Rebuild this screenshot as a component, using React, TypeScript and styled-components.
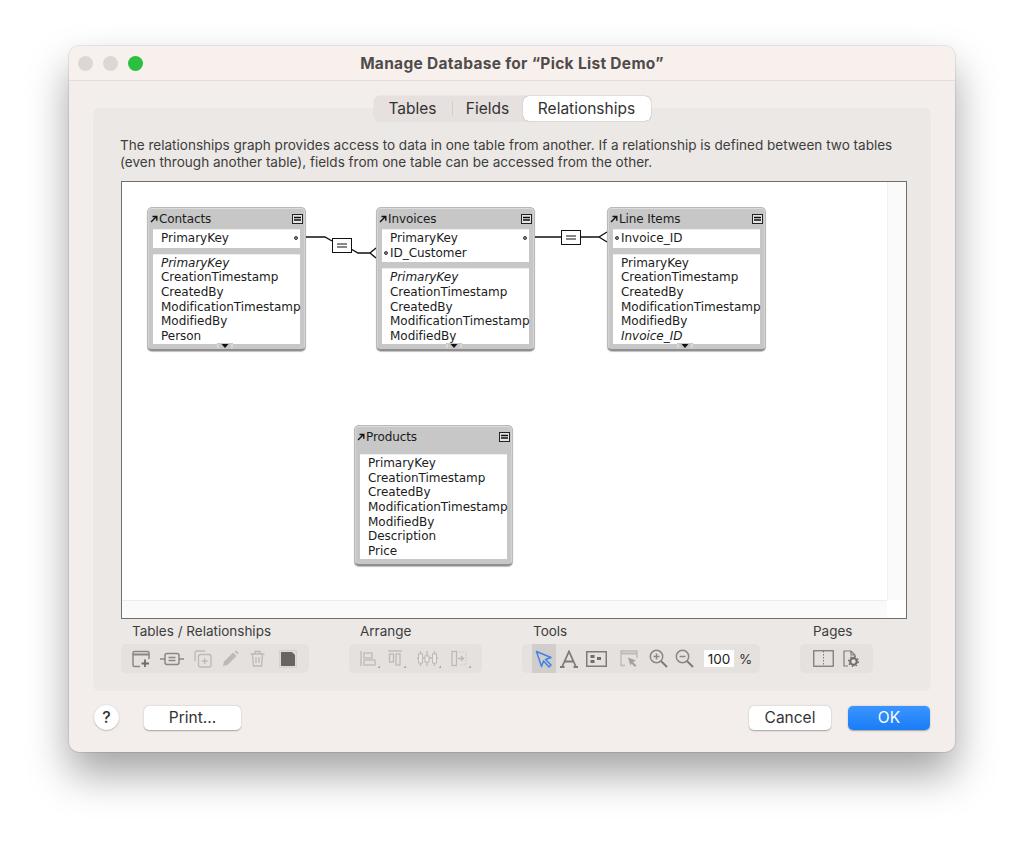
import React from "react";
import styled, { createGlobalStyle } from "styled-components";

const GlobalStyle = createGlobalStyle`
  html, body {
    margin: 0;
    padding: 0;
    background: #ffffff;
  }
  body {
    font-family: "Inter", "Liberation Sans", sans-serif;
    color: #3a3a3a;
  }
`;

const Page = styled.div`
  width: 1024px;
  height: 843px;
  padding: 46px 69px 0;
  box-sizing: border-box;
  overflow: hidden;
`;

const Window = styled.div`
  width: 886px;
  height: 706px;
  box-sizing: border-box;
  border-radius: 10px;
  background: #f3eeeb;
  box-shadow: 0 0 0 1px rgba(0, 0, 0, 0.08), 0 22px 42px rgba(0, 0, 0, 0.36);
  display: flex;
  flex-direction: column;
  overflow: visible;
`;

const TitleBar = styled.div`
  height: 35px;
  flex: none;
  display: flex;
  align-items: center;
  position: relative;
  justify-content: center;
  background: #f8f0ed;
  border-radius: 10px 10px 0 0;
  border-bottom: 1px solid #e2dedb;
  box-sizing: border-box;
`;

const Lights = styled.div`
  position: absolute;
  left: 9px;
  top: 10px;
  display: flex;
  gap: 10px;
`;

const Light = styled.span<{ $color: string }>`
  width: 15px;
  height: 15px;
  border-radius: 50%;
  background: ${(p) => p.$color};
`;

const Title = styled.div`
  font-size: 15.5px;
  font-weight: 700;
  color: #4f4c4b;
  letter-spacing: 0.3px;
`;

const Body = styled.div`
  flex: 1;
  padding: 15px 24px 0;
  display: flex;
  flex-direction: column;
  align-items: center;
`;

const Tabs = styled.div`
  width: 277px;
  height: 25px;
  box-sizing: border-box;
  flex: none;
  margin-bottom: -13px;
  position: relative;
  z-index: 1;
  display: flex;
  align-items: center;
  background: #e6e0de;
  border-radius: 6px;
  box-shadow: 0 0 0 0.5px rgba(0, 0, 0, 0.06);
`;

const Tab = styled.div<{ $w: number; $active?: boolean }>`
  width: ${(p) => p.$w}px;
  height: 25px;
  line-height: 25px;
  text-align: center;
  font-size: 15.5px;
  color: #333;
  border-radius: 6px;
  background: ${(p) => (p.$active ? "#ffffff" : "transparent")};
  box-shadow: ${(p) => (p.$active ? "0 0 1px rgba(0,0,0,.45)" : "none")};
`;

const TabSep = styled.span`
  width: 1px;
  height: 15px;
  background: #d3cecb;
`;

const Panel = styled.div`
  width: 838px;
  height: 583px;
  flex: none;
  box-sizing: border-box;
  padding: 29px 24px 0 27px;
  background: #ece8e5;
  border-radius: 6px;
`;

const Intro = styled.p`
  margin: 0 0 10px;
  font-size: 13.54px;
  line-height: 17px;
  color: #3d3d3d;
  height: 34px;
  white-space: nowrap;
`;

const Canvas = styled.div`
  margin-left: 1px;
  width: 786px;
  height: 438px;
  box-sizing: border-box;
  border: 1px solid #6f6f6f;
  background: #ffffff;
  position: relative;
  overflow: hidden;
`;

const ScrollV = styled.div`
  position: absolute;
  top: 0;
  right: 0;
  bottom: 18px;
  width: 19px;
  box-sizing: border-box;
  background: #fafafa;
  border-left: 1px solid #f0f0f0;
`;

const ScrollH = styled.div`
  position: absolute;
  left: 0;
  right: 19px;
  bottom: 0;
  height: 18px;
  box-sizing: border-box;
  background: #fafafa;
  border-top: 1px solid #ececec;
`;

const Links = styled.svg`
  position: absolute;
  left: 0;
  top: 0;
`;

const Node = styled.div<{ $x: number; $y: number }>`
  position: absolute;
  left: ${(p) => p.$x}px;
  top: ${(p) => p.$y}px;
  width: 159px;
  box-sizing: border-box;
  padding: 0 5px 5px;
  background: #c7c7c7;
  border-radius: 5px;
  border: 1px solid #b9b9b9;
  border-bottom: 2px solid #8f8f8f;
  box-shadow: 0 1px 1px rgba(0, 0, 0, 0.25), inset 0 1px 0 #dcdcdc, inset 1px 0 0 #d4d4d4, inset -1px 0 0 #d4d4d4;
  font-family: "DejaVu Sans", sans-serif;
  color: #1c1c1c;
`;

const NodeHead = styled.div`
  height: 21px;
  display: flex;
  align-items: center;
  margin: 0 -3px;
  font-size: 12px;
`;

const NodeName = styled.span`
  flex: 1;
  margin-left: 1px;
  letter-spacing: -0.1px;
`;

const Rows = styled.div<{ $key?: boolean; $bare?: boolean }>`
  background: #ffffff;
  padding: 1px 0 0 8px;
  margin-top: ${(p) => (p.$bare ? "7px" : "0")};
  margin-bottom: ${(p) => (p.$key ? "6px" : "0")};
  border-top: 1px solid #eeeeee;
`;

const Row = styled.div<{ $italic?: boolean }>`
  height: 14.7px;
  line-height: 14.7px;
  font-size: 12px;
  white-space: nowrap;
  letter-spacing: -0.03px;
  font-style: ${(p) => (p.$italic ? "italic" : "normal")};
  position: relative;
`;

const KeySpacer = styled.div`
  height: 2px;
`;

const Dot = styled.span<{ $side: "left" | "right" }>`
  position: absolute;
  top: 5px;
  width: 4px;
  height: 4px;
  box-sizing: border-box;
  border-radius: 50%;
  border: 1px solid #3a3a3a;
  background: #8a8a8a;
  ${(p) => (p.$side === "left" ? "left: -6px;" : "right: 2px;")}
`;

const Grip = styled.svg`
  position: absolute;
  left: 69px;
  bottom: 0;
`;

const Toolbars = styled.div`
  display: flex;
  gap: 40px;
  margin: 4px 0 0 1px;
`;

const ToolSection = styled.div<{ $w: number }>`
  width: ${(p) => p.$w}px;
  flex: none;
`;

const ToolLabel = styled.div<{ $indent?: number }>`
  height: 21px;
  line-height: 16px;
  padding-left: ${(p) => p.$indent ?? 11}px;
  font-size: 13.5px;
  color: #3d3d3d;
  white-space: nowrap;
`;

const ToolGroup = styled.div<{ $pad: number }>`
  height: 29px;
  display: flex;
  align-items: center;
  box-sizing: border-box;
  padding-left: ${(p) => p.$pad}px;
  background: #e5e1de;
  border-radius: 5px;
`;

const Slot = styled.div<{ $w: number; $on?: boolean }>`
  width: ${(p) => p.$w}px;
  height: 29px;
  flex: none;
  display: flex;
  align-items: center;
  justify-content: center;
  background: ${(p) => (p.$on ? "#d0cdcb" : "transparent")};
`;

const ZoomInput = styled.div`
  width: 30px;
  height: 17px;
  line-height: 18px;
  margin-left: 6px;
  background: #ffffff;
  text-align: center;
  font-size: 13.5px;
  color: #222;
`;

const Percent = styled.span`
  margin-left: 5px;
  font-size: 13.5px;
  color: #333;
`;

const Footer = styled.div`
  width: 838px;
  margin-top: 14px;
  display: flex;
  align-items: center;
`;

const Help = styled.div`
  width: 25px;
  height: 25px;
  margin-left: 1px;
  border-radius: 50%;
  background: #ffffff;
  box-shadow: 0 0.5px 1.5px rgba(0, 0, 0, 0.35);
  text-align: center;
  line-height: 25px;
  font-size: 16px;
  font-weight: 500;
  color: #333;
`;

const Button = styled.div<{ $primary?: boolean }>`
  width: ${(p) => (p.$primary ? "82px" : "auto")};
  height: 24px;
  line-height: 24px;
  border-radius: 5px;
  text-align: center;
  font-size: 15.5px;
  color: ${(p) => (p.$primary ? "#ffffff" : "#333333")};
  background: ${(p) => (p.$primary ? "linear-gradient(#3a95ff, #1a7cf5)" : "#ffffff")};
  box-shadow: 0 0.5px 1.5px rgba(0, 0, 0, 0.32);
`;

const PrintButton = styled(Button)`
  width: 97px;
  margin-left: 25px;
`;

const CancelButton = styled(Button)`
  width: 82px;
  margin-left: auto;
  margin-right: 17px;
`;

const OkButton = styled(Button)`
  margin-right: 1px;
`;

type Field = { name: string; italic?: boolean };
type TableDef = {
  name: string;
  x: number;
  y: number;
  keys?: { name: string; dot: "left" | "right" }[];
  fields: Field[];
  grip?: boolean;
};

const tables: TableDef[] = [
  {
    name: "Contacts",
    x: 25,
    y: 25,
    grip: true,
    keys: [{ name: "PrimaryKey", dot: "right" }],
    fields: [
      { name: "PrimaryKey", italic: true },
      { name: "CreationTimestamp" },
      { name: "CreatedBy" },
      { name: "ModificationTimestamp" },
      { name: "ModifiedBy" },
      { name: "Person" },
    ],
  },
  {
    name: "Invoices",
    x: 254,
    y: 25,
    grip: true,
    keys: [
      { name: "PrimaryKey", dot: "right" },
      { name: "ID_Customer", dot: "left" },
    ],
    fields: [
      { name: "PrimaryKey", italic: true },
      { name: "CreationTimestamp" },
      { name: "CreatedBy" },
      { name: "ModificationTimestamp" },
      { name: "ModifiedBy" },
    ],
  },
  {
    name: "Line Items",
    x: 485,
    y: 25,
    grip: true,
    keys: [{ name: "Invoice_ID", dot: "left" }],
    fields: [
      { name: "PrimaryKey" },
      { name: "CreationTimestamp" },
      { name: "CreatedBy" },
      { name: "ModificationTimestamp" },
      { name: "ModifiedBy" },
      { name: "Invoice_ID", italic: true },
    ],
  },
  {
    name: "Products",
    x: 232,
    y: 243,
    fields: [
      { name: "PrimaryKey" },
      { name: "CreationTimestamp" },
      { name: "CreatedBy" },
      { name: "ModificationTimestamp" },
      { name: "ModifiedBy" },
      { name: "Description" },
      { name: "Price" },
    ],
  },
];

const TableNode = ({ table }: { table: TableDef }) => (
  <Node $x={table.x} $y={table.y}>
    <NodeHead>
      <svg width="8" height="8" viewBox="0 0 8 8">
        <path d="M1 7 L6 2 M2.5 1.5 H6.8 V5.8" fill="none" stroke="#111" strokeWidth="1.4" />
      </svg>
      <NodeName>{table.name}</NodeName>
      <svg width="11" height="10" viewBox="0 0 11 10">
        <rect x="0.5" y="0.5" width="10" height="9" fill="#e4e4e4" stroke="#222" />
        <path d="M2 3.5 H9 M2 6 H9" stroke="#111" strokeWidth="1.5" />
      </svg>
    </NodeHead>
    {table.keys && (
      <Rows $key>
        {table.keys.map((k) => (
          <Row key={k.name}>
            {k.dot === "left" && <Dot $side="left" />}
            {k.name}
            {k.dot === "right" && <Dot $side="right" />}
          </Row>
        ))}
        <KeySpacer />
      </Rows>
    )}
    <Rows $bare={!table.keys}>
      {table.fields.map((f) => (
        <Row key={f.name} $italic={f.italic}>
          {f.name}
        </Row>
      ))}
    </Rows>
    {table.grip && (
      <Grip width="16" height="6" viewBox="0 0 16 6">
        <rect width="16" height="6" fill="#c7c7c7" />
        <path d="M1 1 V5 M15 1 V5" stroke="#e8e8e8" />
        <path d="M4.5 1 H11.5 L8 5 Z" fill="#111" />
      </Grip>
    )}
  </Node>
);

const EqualBox = ({ x, y }: { x: number; y: number }) => (
  <g>
    <rect x={x + 0.5} y={y + 0.5} width="19" height="14" fill="#fff" stroke="#111" />
    <path d={`M${x + 5} ${y + 6} H${x + 15} M${x + 5} ${y + 9} H${x + 15}`} stroke="#111" />
  </g>
);

const Stroke = { fill: "none", stroke: "#8a8785", strokeWidth: 1.5 };
const Faint = { fill: "none", stroke: "#bdb9b6", strokeWidth: 1.3 };

const Corner = ({ x, y }: { x: number; y: number }) => (
  <path d={`M${x} ${y} h-2.5 l2.5 -2.5 Z`} fill="#a9a5a2" />
);

export default function App() {
  return (
    <Page>
      <GlobalStyle />
      <Window>
        <TitleBar>
          <Lights>
            <Light $color="#dcd7d5" />
            <Light $color="#dcd7d5" />
            <Light $color="#2ac140" />
          </Lights>
          <Title>Manage Database for “Pick List Demo”</Title>
        </TitleBar>
        <Body>
          <Tabs>
            <Tab $w={78}>Tables</Tab>
            <TabSep />
            <Tab $w={70}>Fields</Tab>
            <Tab $w={128} $active>
              Relationships
            </Tab>
          </Tabs>
          <Panel>
            <Intro>
              The relationships graph provides access to data in one table from another. If a relationship is defined between two tables
              <br />
              (even through another table), fields from one table can be accessed from the other.
            </Intro>
            <Canvas>
              <ScrollV />
              <ScrollH />
              <Links width="784" height="436" viewBox="0 0 784 436">
                <path d="M184 55 H203 L210 59 M229 67 L236 71 H248 M248 71 L254 66 M248 71 L254 76" fill="none" stroke="#111" strokeWidth="1.4" />
                <EqualBox x={210} y={56} />
                <path d="M413 55 H439 M459 55 H477 M477 55 L485 50 M477 55 L485 60" fill="none" stroke="#111" strokeWidth="1.4" />
                <EqualBox x={439} y={48} />
              </Links>
              {tables.map((t) => (
                <TableNode key={t.name} table={t} />
              ))}
            </Canvas>
            <Toolbars>
              <ToolSection $w={188}>
                <ToolLabel>Tables / Relationships</ToolLabel>
                <ToolGroup $pad={6}>
                  <Slot $w={27}>
                    <svg width="18" height="18" viewBox="0 0 18 18">
                      <path d="M1 9 V15 Q1 16.5 2.5 16.5 H8 M17 9 V3 Q17 1.5 15.5 1.5 H2.5 Q1 1.5 1 3 V9" {...Stroke} />
                      <path d="M1 4.5 H17" stroke="#8a8785" strokeWidth="2" />
                      <path d="M13 9.5 V17 M9.5 13.5 H17" stroke="#6f6c6a" strokeWidth="1.8" />
                    </svg>
                  </Slot>
                  <Slot $w={36}>
                    <svg width="24" height="14" viewBox="0 0 24 14">
                      <rect x="5" y="1.5" width="14" height="11" rx="2" {...Stroke} />
                      <path d="M0 7 H5 M19 7 H24 M8.5 5.5 H15.5 M8.5 8.5 H15.5" {...Stroke} />
                    </svg>
                  </Slot>
                  <Slot $w={26}>
                    <svg width="18" height="18" viewBox="0 0 18 18">
                      <path d="M1 11 V3 Q1 1 3 1 H11" {...Faint} />
                      <rect x="4.5" y="4.5" width="12.5" height="12.5" rx="2" {...Faint} />
                      <path d="M10.7 8 V14 M7.7 11 H13.7" {...Faint} />
                    </svg>
                  </Slot>
                  <Slot $w={29}>
                    <svg width="17" height="17" viewBox="0 0 17 17">
                      <path d="M1 16 L2 11.5 L11 2.5 L14.5 6 L5.5 15 Z" fill="#bdb9b6" />
                      <path d="M12.5 1.5 L14 0.5 L16.5 3 L15.5 4.5 Z" fill="#bdb9b6" />
                    </svg>
                  </Slot>
                  <Slot $w={25}>
                    <svg width="15" height="17" viewBox="0 0 15 17">
                      <path d="M0.5 4 H14.5 M5 4 V1.5 H10 V4 M2.5 4 L3.5 16 H11.5 L12.5 4 M6 7 V13 M9 7 V13" {...Faint} />
                    </svg>
                  </Slot>
                  <Slot $w={36}>
                    <svg width="18" height="18" viewBox="0 0 18 18">
                      <rect x="0.5" y="0.5" width="17" height="17" fill="#dedad7" stroke="#d6d2cf" />
                      <path d="M2 2 H13 L16 5 V16 H2 Z" fill="#676564" />
                    </svg>
                  </Slot>
                </ToolGroup>
              </ToolSection>
              <ToolSection $w={133}>
                <ToolLabel>Arrange</ToolLabel>
                <ToolGroup $pad={5}>
                  <Slot $w={31}>
                    <svg width="20" height="18" viewBox="0 0 20 18">
                      <path d="M1 1 V16" {...Faint} />
                      <rect x="4" y="3" width="8" height="5" {...Faint} />
                      <rect x="4" y="10" width="11" height="5" {...Faint} />
                      <Corner x={20} y={18} />
                    </svg>
                  </Slot>
                  <Slot $w={24}>
                    <svg width="18" height="18" viewBox="0 0 18 18">
                      <path d="M0 1 H14" {...Faint} />
                      <rect x="1.5" y="4" width="4" height="8" {...Faint} />
                      <rect x="8" y="4" width="4" height="11" {...Faint} />
                      <Corner x={18} y={18} />
                    </svg>
                  </Slot>
                  <Slot $w={40}>
                    <svg width="24" height="18" viewBox="0 0 24 18">
                      <path d="M3.5 1 V16 M10 1 V16 M17.5 1 V16 M0 8 H21" {...Faint} />
                      <rect x="1.5" y="4" width="4" height="9" fill="#ece8e5" stroke="#bdb9b6" />
                      <rect x="8" y="6" width="4" height="6" fill="#ece8e5" stroke="#bdb9b6" />
                      <rect x="15.5" y="4" width="4" height="9" fill="#ece8e5" stroke="#bdb9b6" />
                      <Corner x={24} y={18} />
                    </svg>
                  </Slot>
                  <Slot $w={23}>
                    <svg width="20" height="18" viewBox="0 0 20 18">
                      <rect x="1" y="1.5" width="4.5" height="14" {...Faint} />
                      <path d="M8 2 H15 V15 H8" fill="none" stroke="#c9c5c2" strokeDasharray="1.5 1.5" />
                      <path d="M7 8.5 H12 M10 6 L12.5 8.5 L10 11" {...Faint} />
                      <Corner x={20} y={18} />
                    </svg>
                  </Slot>
                </ToolGroup>
              </ToolSection>
              <ToolSection $w={238}>
                <ToolLabel>Tools</ToolLabel>
                <ToolGroup $pad={10}>
                  <Slot $w={24} $on>
                    <svg width="18" height="18" viewBox="0 0 18 18">
                      <path d="M1.5 1.5 L16 7.5 L10.5 9.5 L16 15 L14 17 L8.5 11 L6.5 16.5 Z" fill="none" stroke="#3f83e6" strokeWidth="1.5" strokeLinejoin="round" />
                    </svg>
                  </Slot>
                  <Slot $w={25}>
                    <svg width="18" height="18" viewBox="0 0 18 18">
                      <path d="M2 17 L9 1.5 L16 17 M4.5 11.5 H13.5 M0 17 H4.5 M13.5 17 H18" fill="none" stroke="#7e7b79" strokeWidth="1.8" />
                    </svg>
                  </Slot>
                  <Slot $w={31}>
                    <svg width="21" height="16" viewBox="0 0 21 16">
                      <rect x="0.75" y="0.75" width="19.5" height="14.5" fill="none" stroke="#7e7b79" strokeWidth="1.5" />
                      <rect x="4.5" y="4" width="4" height="3" fill="#6f6c6a" />
                      <rect x="4.5" y="9" width="4" height="3" fill="#6f6c6a" />
                      <rect x="11" y="6" width="4" height="3" fill="#6f6c6a" />
                    </svg>
                  </Slot>
                  <Slot $w={34}>
                    <svg width="18" height="17" viewBox="0 0 18 17">
                      <path d="M5 15.5 H1 V1 H17 V8" {...Faint} />
                      <path d="M1 3.5 H17" stroke="#bdb9b6" strokeWidth="2" />
                      <path d="M8 7.5 L16 10.5 L13 12 L16.5 15.5 L15 17 L11.5 13.5 L10.5 16 Z" fill="#a5a19f" />
                    </svg>
                  </Slot>
                  <Slot $w={24}>
                    <svg width="19" height="19" viewBox="0 0 19 19">
                      <circle cx="7.5" cy="7.5" r="6.2" {...Stroke} />
                      <path d="M12 12 L18 18" fill="none" stroke="#7e7b79" strokeWidth="2" />
                      <path d="M4.5 7.5 H10.5 M7.5 4.5 V10.5" {...Stroke} />
                    </svg>
                  </Slot>
                  <Slot $w={28}>
                    <svg width="19" height="19" viewBox="0 0 19 19">
                      <circle cx="7.5" cy="7.5" r="6.2" {...Stroke} />
                      <path d="M12 12 L18 18" fill="none" stroke="#7e7b79" strokeWidth="2" />
                      <path d="M4.5 7.5 H10.5" {...Stroke} />
                    </svg>
                  </Slot>
                  <ZoomInput>100</ZoomInput>
                  <Percent>%</Percent>
                </ToolGroup>
              </ToolSection>
              <ToolSection $w={73}>
                <ToolLabel $indent={13}>Pages</ToolLabel>
                <ToolGroup $pad={8}>
                  <Slot $w={31}>
                    <svg width="21" height="17" viewBox="0 0 21 17">
                      <rect x="0.75" y="0.75" width="19.5" height="15.5" fill="none" stroke="#7e7b79" strokeWidth="1.3" />
                      <path d="M10.5 1 V16" stroke="#7e7b79" strokeDasharray="1.5 1.5" />
                    </svg>
                  </Slot>
                  <Slot $w={23}>
                    <svg width="16" height="17" viewBox="0 0 16 17">
                      <path d="M5 16 H1 V1 H8 L12 5 V7 M8 1 V5 H12" fill="none" stroke="#7e7b79" strokeWidth="1.2" />
                      <circle cx="10.5" cy="11.5" r="3.3" fill="none" stroke="#6f6c6a" strokeWidth="2.2" />
                      <circle cx="10.5" cy="11.5" r="5" fill="none" stroke="#6f6c6a" strokeWidth="1.2" strokeDasharray="1.6 2.3" />
                    </svg>
                  </Slot>
                </ToolGroup>
              </ToolSection>
            </Toolbars>
          </Panel>
          <Footer>
            <Help>?</Help>
            <PrintButton>Print...</PrintButton>
            <CancelButton>Cancel</CancelButton>
            <OkButton $primary>OK</OkButton>
          </Footer>
        </Body>
      </Window>
    </Page>
  );
}
